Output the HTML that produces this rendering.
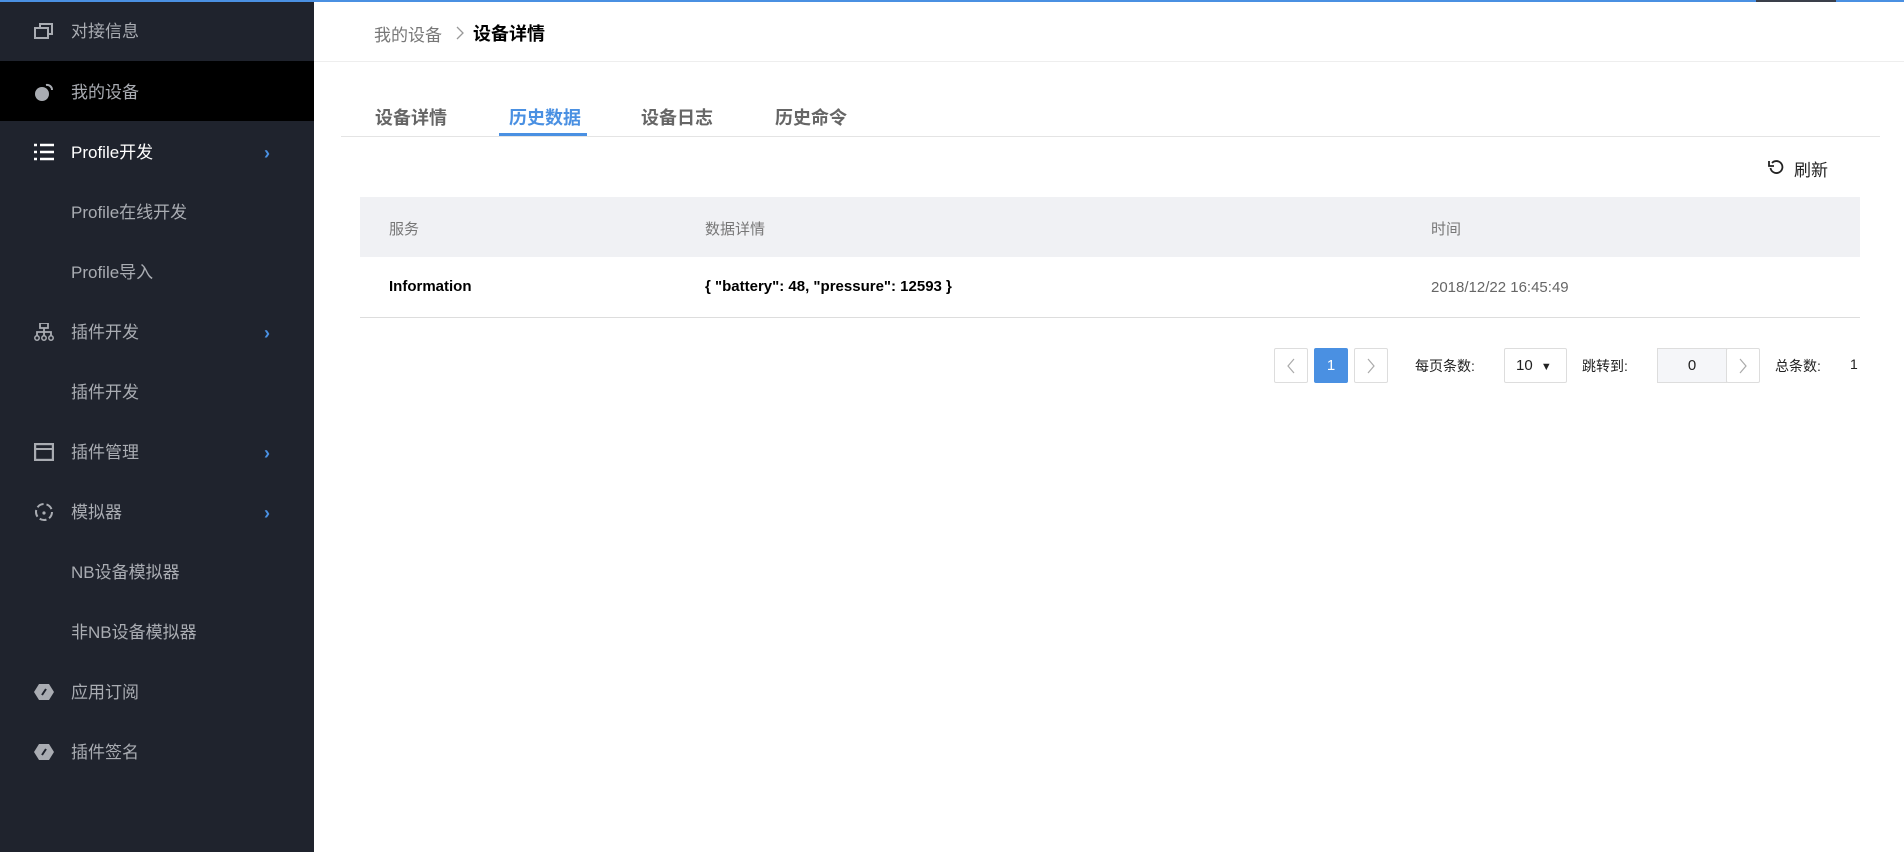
<!DOCTYPE html>
<html><head><meta charset="utf-8"><style>
*{margin:0;padding:0;box-sizing:border-box}
body{width:1904px;height:852px;overflow:hidden;background:#fff;font-family:"Liberation Sans","Noto Sans CJK SC",sans-serif;position:relative}
.top{position:absolute;left:0;top:0;width:1904px;height:2px;background:#4a90e2;z-index:5}
.top i{position:absolute;left:1756px;width:80px;height:2px;background:#3a3f4a}
.side{position:absolute;left:0;top:0;width:314px;height:852px;background:#1f232d}
.it{position:absolute;left:0;width:314px;height:60px;color:#a9acb2;font-size:17px;line-height:64px;padding-left:71px}
.it.on{background:#000}
.it.w{color:#fff}
.ic{position:absolute;left:34px;top:22px;width:20px;height:18px}
.ch{position:absolute;left:264px;top:0;color:#4a90e2;font-size:18px;font-weight:bold}
.a{position:absolute;white-space:nowrap}
.pb{position:absolute;top:348px;height:35px;border:1px solid #ddd;border-radius:2px;text-align:center}
</style></head><body>
<div class="top"><i></i></div>
<div class="side">
<div class="it" style="top:0"><svg class="ic" viewBox="0 0 20 18"><rect x="1" y="6" width="13" height="10" fill="none" stroke="#a9acb2" stroke-width="2"/><path d="M6 5V2h12v10h-3" fill="none" stroke="#a9acb2" stroke-width="2"/></svg>对接信息</div>
<div class="it on" style="top:61px"><svg class="ic" viewBox="0 0 20 18"><circle cx="8" cy="11" r="7" fill="#a9acb2"/><path d="M12 2a5 5 0 0 1 6 5" fill="none" stroke="#a9acb2" stroke-width="2"/></svg>我的设备</div>
<div class="it w" style="top:121px"><svg class="ic" viewBox="0 0 20 18"><path d="M0 2h3M6 2h14M0 9h3M6 9h14M0 16h3M6 16h14" stroke="#fff" stroke-width="2.4"/></svg>Profile开发<span class="ch">›</span></div>
<div class="it" style="top:181px">Profile在线开发</div>
<div class="it" style="top:241px">Profile导入</div>
<div class="it" style="top:301px"><svg class="ic" viewBox="0 0 20 18"><rect x="6" y="0" width="8" height="5" fill="none" stroke="#a9acb2" stroke-width="1.8"/><path d="M10 5v4M3 13V9h14v4M10 9v4" fill="none" stroke="#a9acb2" stroke-width="1.8"/><circle cx="3" cy="15" r="2.2" fill="none" stroke="#a9acb2" stroke-width="1.5"/><circle cx="10" cy="15" r="2.2" fill="none" stroke="#a9acb2" stroke-width="1.5"/><circle cx="17" cy="15" r="2.2" fill="none" stroke="#a9acb2" stroke-width="1.5"/></svg>插件开发<span class="ch">›</span></div>
<div class="it" style="top:361px">插件开发</div>
<div class="it" style="top:421px"><svg class="ic" viewBox="0 0 20 18"><rect x="1" y="1" width="18" height="16" fill="none" stroke="#a9acb2" stroke-width="2.4"/><path d="M1 6h18" stroke="#a9acb2" stroke-width="2"/></svg>插件管理<span class="ch">›</span></div>
<div class="it" style="top:481px"><svg class="ic" viewBox="0 0 20 18"><circle cx="10" cy="9" r="8" fill="none" stroke="#a9acb2" stroke-width="2" stroke-dasharray="7 3"/><circle cx="10" cy="10" r="1.6" fill="#a9acb2"/></svg>模拟器<span class="ch">›</span></div>
<div class="it" style="top:541px">NB设备模拟器</div>
<div class="it" style="top:601px">非NB设备模拟器</div>
<div class="it" style="top:661px"><svg class="ic" viewBox="0 0 20 18"><path d="M5 1h10l5 8-5 8H5L0 9z" fill="#a9acb2"/><path d="M8 12l4-6" stroke="#1f232d" stroke-width="2"/></svg>应用订阅</div>
<div class="it" style="top:721px"><svg class="ic" viewBox="0 0 20 18"><path d="M5 1h10l5 8-5 8H5L0 9z" fill="#a9acb2"/><path d="M8 12l4-6" stroke="#1f232d" stroke-width="2"/></svg>插件签名</div>
</div>
<div class="a" style="left:374px;top:21px;font-size:17px;color:#777">我的设备</div>
<svg class="a" style="left:456px;top:26px" width="9" height="14" viewBox="0 0 9 14"><path d="M1 1l6 6-6 6" fill="none" stroke="#999" stroke-width="1.3"/></svg>
<div class="a" style="left:473px;top:20px;font-size:18px;color:#000;font-weight:bold">设备详情</div>
<div class="a" style="left:314px;top:61px;width:1590px;height:1px;background:#eee"></div>
<div class="a" style="left:375px;top:104px;font-size:18px;color:#666;font-weight:bold">设备详情</div>
<div class="a" style="left:509px;top:104px;font-size:18px;color:#4a90e2;font-weight:bold">历史数据</div>
<div class="a" style="left:641px;top:104px;font-size:18px;color:#666;font-weight:bold">设备日志</div>
<div class="a" style="left:775px;top:104px;font-size:18px;color:#666;font-weight:bold">历史命令</div>
<div class="a" style="left:341px;top:136px;width:1539px;height:1px;background:#e4e4e4"></div>
<div class="a" style="left:499px;top:133px;width:88px;height:3px;background:#4a90e2"></div>
<svg class="a" style="left:1768px;top:159px" width="17" height="17" viewBox="0 0 17 17"><path d="M4 4A6 6 0 1 1 2.5 9" fill="none" stroke="#222" stroke-width="1.8"/><path d="M1 2v5h5" fill="none" stroke="#222" stroke-width="1.8"/></svg>
<div class="a" style="left:1794px;top:156px;font-size:17px;color:#222">刷新</div>
<div class="a" style="left:360px;top:197px;width:1500px;height:60px;background:#f0f1f4"></div>
<div class="a" style="left:389px;top:218px;font-size:15px;color:#777">服务</div>
<div class="a" style="left:705px;top:218px;font-size:15px;color:#777">数据详情</div>
<div class="a" style="left:1431px;top:218px;font-size:15px;color:#777">时间</div>
<div class="a" style="left:389px;top:278px;font-size:15px;color:#000;font-weight:bold">Information</div>
<div class="a" style="left:705px;top:278px;font-size:15px;color:#000;font-weight:bold">{ "battery": 48, "pressure": 12593 }</div>
<div class="a" style="left:1431px;top:279px;font-size:15px;color:#666">2018/12/22 16:45:49</div>
<div class="a" style="left:360px;top:317px;width:1500px;height:1px;background:#ddd"></div>
<div class="pb" style="left:1274px;width:34px"><svg width="10" height="16" viewBox="0 0 10 16" style="margin-top:9px"><path d="M8 1L2 8l6 7" fill="none" stroke="#aaa" stroke-width="1.2"/></svg></div>
<div class="pb" style="left:1314px;width:34px;background:#4a90e2;border-color:#4a90e2;color:#fff;line-height:33px;font-size:15px">1</div>
<div class="pb" style="left:1354px;width:34px"><svg width="10" height="16" viewBox="0 0 10 16" style="margin-top:9px"><path d="M2 1l6 7-6 7" fill="none" stroke="#aaa" stroke-width="1.2"/></svg></div>
<div class="a" style="left:1415px;top:356px;font-size:14px;color:#222">每页条数:</div>
<div class="pb" style="left:1504px;width:63px;font-size:15px;line-height:33px;text-align:left;padding-left:11px;color:#222">10 <span style="font-size:11px;margin-left:4px">▼</span></div>
<div class="a" style="left:1582px;top:356px;font-size:14px;color:#222">跳转到:</div>
<div class="pb" style="left:1657px;width:70px;border-radius:0;background:#f5f6f9;font-size:15px;line-height:33px;color:#222">0</div>
<div class="pb" style="left:1726px;width:34px"><svg width="10" height="16" viewBox="0 0 10 16" style="margin-top:9px"><path d="M2 1l6 7-6 7" fill="none" stroke="#aaa" stroke-width="1.2"/></svg></div>
<div class="a" style="left:1775px;top:356px;font-size:14px;color:#222">总条数:</div>
<div class="a" style="left:1850px;top:356px;font-size:14px;color:#222">1</div>
</body></html>
